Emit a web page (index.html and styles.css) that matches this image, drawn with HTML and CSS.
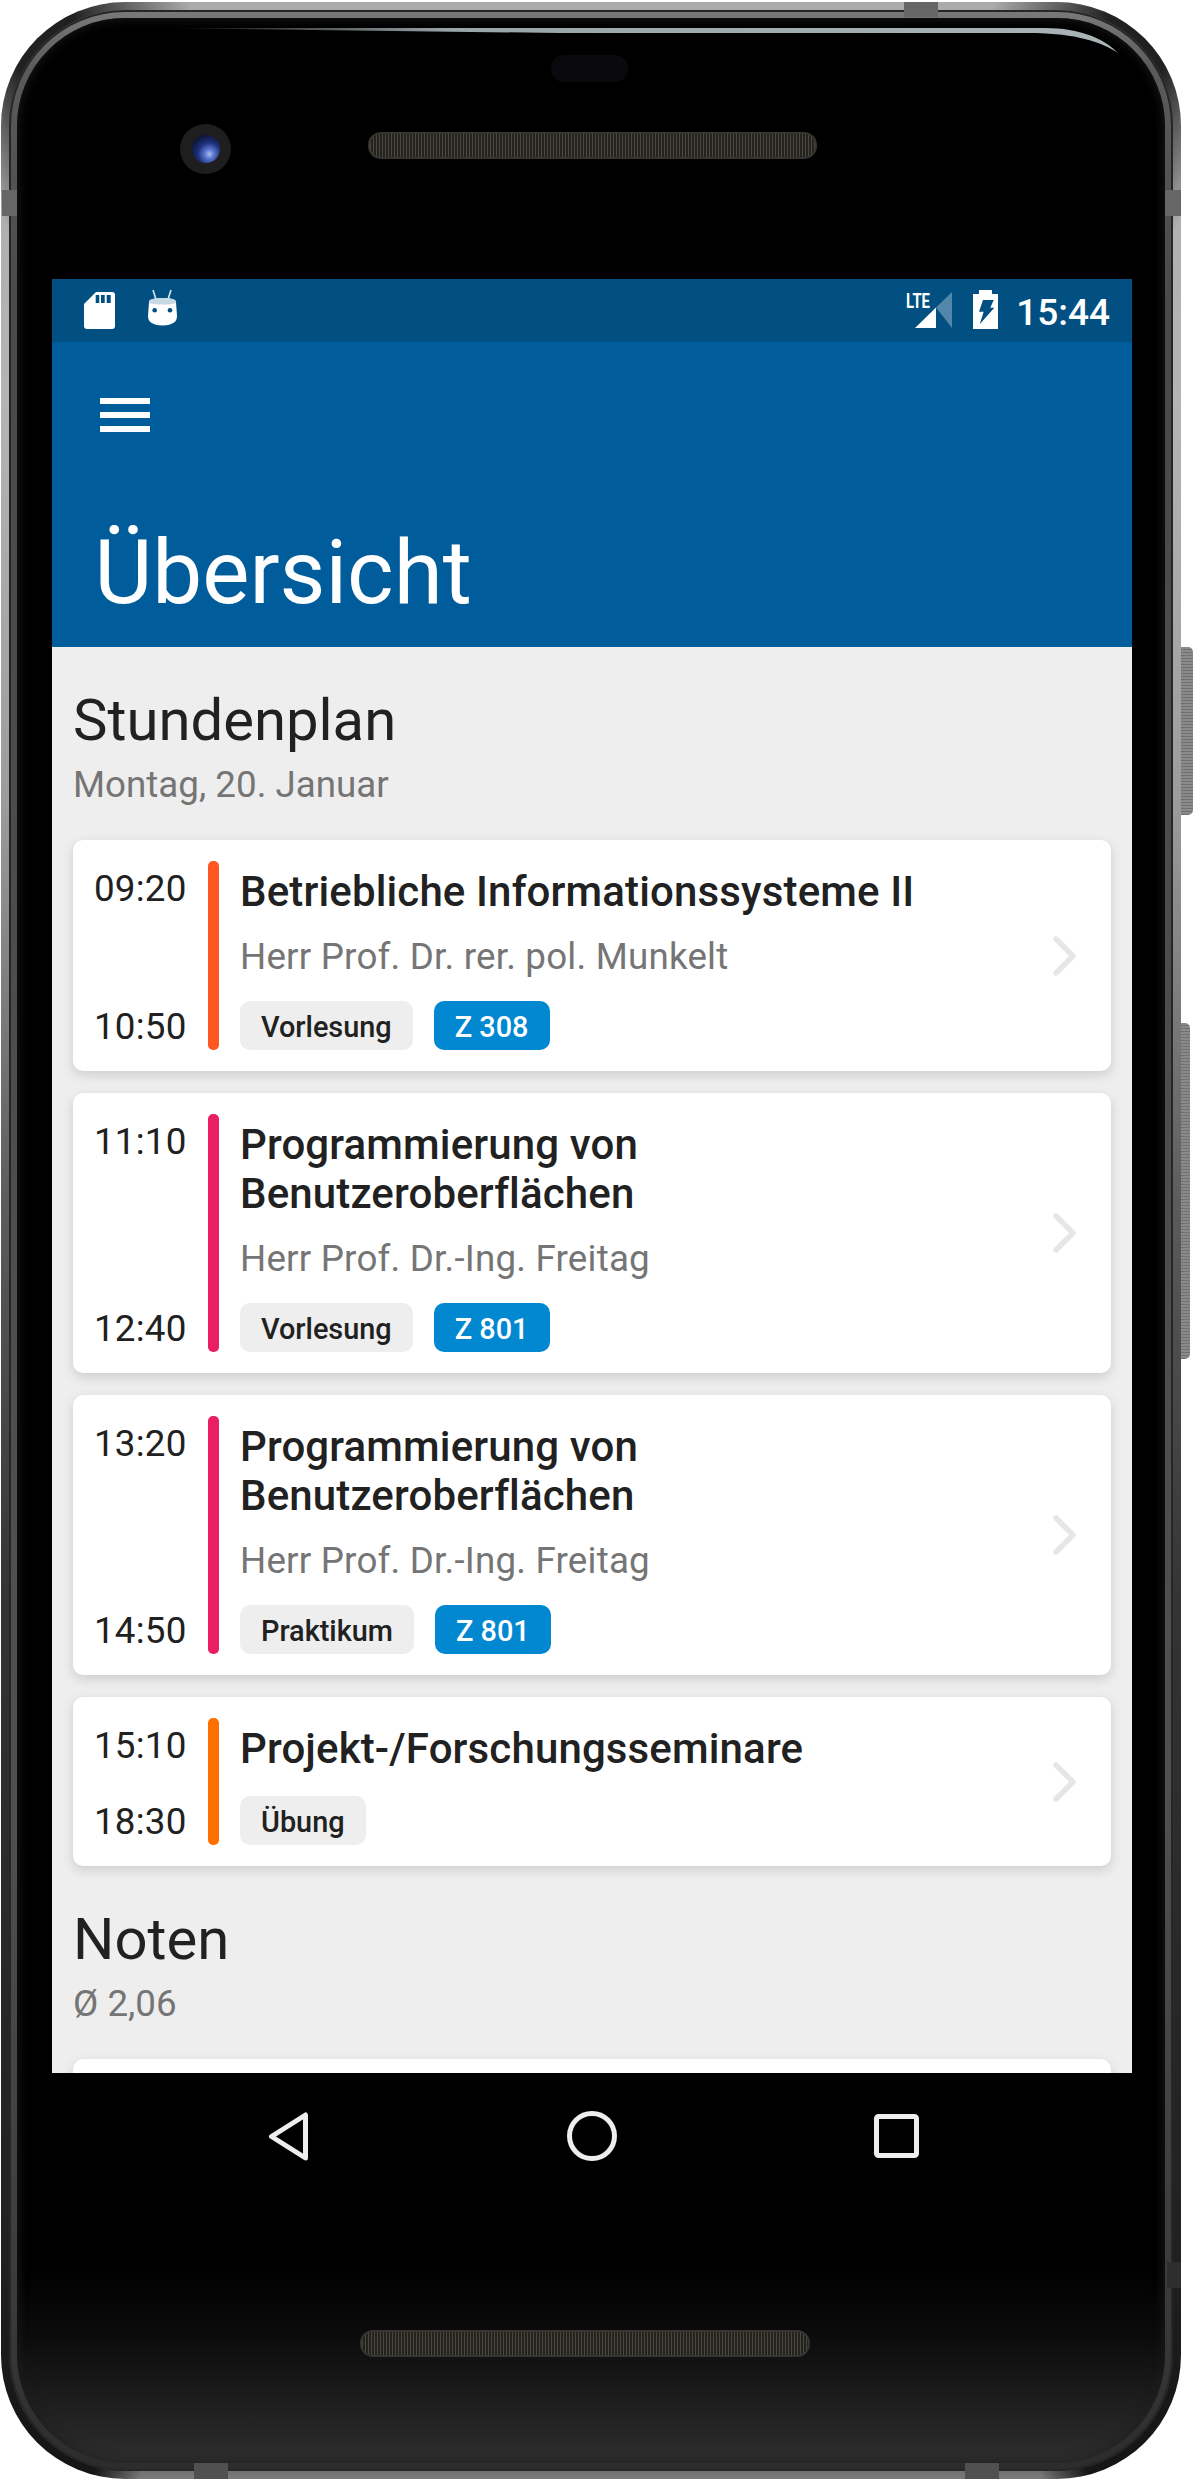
FILE: index.html
```html
<!DOCTYPE html>
<html lang="de">
<head>
    <meta charset="UTF-8">
    <meta name="viewport" content="width=device-width, initial-scale=1.0">
    <title>Übersicht</title>
    <link rel="stylesheet" href="styles.css">
</head>
<body>
<div class="phone">
    <div class="side-btn power"></div>
    <div class="side-btn volume"></div>
    <div class="seam seam-top"></div>
    <div class="seam seam-left"></div>
    <div class="seam seam-right"></div>
    <div class="seam seam-bottom-a"></div>
    <div class="seam seam-bottom-b"></div>
    <div class="seam seam-right-low"></div>
    <div class="bezel">
        <div class="face">
            <svg class="glint" width="1000" height="40" viewBox="0 0 1000 40">
                <defs>
                    <linearGradient id="glintFade" x1="0" x2="1" y1="0" y2="0">
                        <stop offset="0" stop-color="#9aa5a8" stop-opacity="0"/>
                        <stop offset="0.3" stop-color="#9aa5a8"/>
                        <stop offset="1" stop-color="#aab4b6"/>
                    </linearGradient>
                </defs>
                <path d="M0 1H885C920 1 945 12 958 26C940 14 915 7 875 6H400Z" fill="url(#glintFade)"/>
            </svg>

            <div class="face-top">
                <div class="sensor"></div>
                <div class="face-row">
                    <div class="camera"><div class="lens"></div></div>
                    <div class="speaker speaker-top"></div>
                </div>
            </div>

            <div class="screen">
                <div class="statusbar">
                    <div class="status-left">
                        <svg class="ic-sd" width="31" height="37" viewBox="0 0 31 37">
                            <path d="M12 0H28a3 3 0 0 1 3 3V34a3 3 0 0 1-3 3H3a3 3 0 0 1-3-3V12Z" fill="#fff"/>
                            <path d="M11.7 3h3.6v8h-3.6zM17 3h3.7v8H17zM22.7 3h4v8h-4z" fill="#024f82"/>
                        </svg>
                        <svg class="ic-mm" width="31" height="37" viewBox="0 0 31 37">
                            <path d="M6 1L8.7 9.5M24 1L21.3 9.5" stroke="#dbe6ee" stroke-width="1.6" fill="none"/>
                            <path d="M2 13C2 10 8 9 15.5 9S29 10 29 13L30 27C30 33 26 36 15.5 36.5 5 36 1 33 1 27Z" fill="#fff"/>
                            <path d="M2 13C2 10 8 9 15.5 9S29 10 29 13L29 14C22 16 9 16 2 14Z" fill="#c6d9e5"/>
                            <circle cx="7.7" cy="21.3" r="2.3" fill="#024f82"/>
                            <circle cx="23" cy="21.3" r="2.3" fill="#024f82"/>
                        </svg>
                    </div>
                    <div class="status-right">
                        <svg class="ic-lte" width="46" height="36" viewBox="0 0 46 36">
                            <text x="0" y="16" class="lte-text" textLength="24" lengthAdjust="spacingAndGlyphs">LTE</text>
                            <polygon points="9,36 30,15.5 30,36" fill="#fff"/>
                            <polygon points="30,15.5 46,0 46,36" fill="#fff" opacity="0.32"/>
                        </svg>
                        <svg class="ic-batt" width="25" height="39" viewBox="0 0 25 39">
                            <path d="M6 0H19V4H25V39H0V4H6Z" fill="#fff"/>
                            <polygon points="10,10 20.7,10 17.3,17.7 21.3,17.7 6.7,34.3 10.7,21.7 6,21.7" fill="#024f82"/>
                        </svg>
                        <span class="clock">15:44</span>
                    </div>
                </div>

                <div class="appbar">
                    <div class="hamburger"><span></span><span></span><span></span></div>
                    <h1>Übersicht</h1>
                </div>

                <div class="content">
                    <h2>Stundenplan</h2>
                    <p class="subhead">Montag, 20. Januar</p>

                    <div class="card">
                        <div class="times"><span>09:20</span><span>10:50</span></div>
                        <div class="bar bar-red"></div>
                        <div class="info">
                            <div class="title">Betriebliche Informationssysteme II</div>
                            <div class="teacher">Herr Prof. Dr. rer. pol. Munkelt</div>
                            <div class="tags"><span class="tag">Vorlesung</span><span class="tag room">Z 308</span></div>
                        </div>
                        <svg class="chevron" width="23" height="40" viewBox="0 0 23 40"><path d="M3 3L20 20L3 37"/></svg>
                    </div>

                    <div class="card">
                        <div class="times"><span>11:10</span><span>12:40</span></div>
                        <div class="bar bar-pink"></div>
                        <div class="info">
                            <div class="title">Programmierung von<br>Benutzeroberflächen</div>
                            <div class="teacher">Herr Prof. Dr.-Ing. Freitag</div>
                            <div class="tags"><span class="tag">Vorlesung</span><span class="tag room">Z 801</span></div>
                        </div>
                        <svg class="chevron" width="23" height="40" viewBox="0 0 23 40"><path d="M3 3L20 20L3 37"/></svg>
                    </div>

                    <div class="card">
                        <div class="times"><span>13:20</span><span>14:50</span></div>
                        <div class="bar bar-pink"></div>
                        <div class="info">
                            <div class="title">Programmierung von<br>Benutzeroberflächen</div>
                            <div class="teacher">Herr Prof. Dr.-Ing. Freitag</div>
                            <div class="tags"><span class="tag">Praktikum</span><span class="tag room">Z 801</span></div>
                        </div>
                        <svg class="chevron" width="23" height="40" viewBox="0 0 23 40"><path d="M3 3L20 20L3 37"/></svg>
                    </div>

                    <div class="card">
                        <div class="times"><span>15:10</span><span>18:30</span></div>
                        <div class="bar bar-orange"></div>
                        <div class="info">
                            <div class="title">Projekt-/Forschungsseminare</div>
                            <div class="tags"><span class="tag">Übung</span></div>
                        </div>
                        <svg class="chevron" width="23" height="40" viewBox="0 0 23 40"><path d="M3 3L20 20L3 37"/></svg>
                    </div>

                    <h2 class="next-section">Noten</h2>
                    <p class="subhead">Ø 2,06</p>
                    <div class="card card-empty"></div>
                </div>
            </div>

            <div class="navbar">
                <svg width="41" height="49" viewBox="0 0 41 49"><path d="M37.5 3V46L3.5 24.5Z"/></svg>
                <svg width="50" height="50" viewBox="0 0 50 50"><circle cx="25" cy="25" r="22.5"/></svg>
                <svg width="45" height="44" viewBox="0 0 45 44"><rect x="2.5" y="2.5" width="40" height="39" rx="2"/></svg>
            </div>

            <div class="speaker speaker-bottom"></div>
        </div>
    </div>
</div>
</body>
</html>
```

FILE: styles.css
```css
* {
    box-sizing: border-box;
}

body {
    margin: 0;
    background-color: #FFFFFF;
    font-family: Roboto, "Liberation Sans", sans-serif;
}

/* Phone shell: metal band goes dark towards the bottom, corners stay dark */
.phone {
    position: relative;
    width: 1180px;
    height: 2477px;
    margin: 2px 0 0 1px;
    padding: 8px;
    border-radius: 124px;
    background:
        conic-gradient(
            transparent 0deg 18deg,
            rgba(25, 25, 25, 0.95) 23deg 26deg,
            transparent 30deg 150deg,
            #161616 155deg 158deg,
            transparent 160deg 200deg,
            #161616 202deg 205deg,
            transparent 210deg 330deg,
            rgba(25, 25, 25, 0.95) 334deg 337deg,
            transparent 342deg 360deg
        ),
        linear-gradient(to bottom, #ababab 0, #ababab 20px, #b4b4b4 400px, #9c9c9c 800px, #5c5c5c 1200px, #343434 1600px, #242424 2100px, #1c1c1c 2455px, #6e6e6e 2466px, #7a7a7a 100%);
}

.bezel {
    height: 100%;
    padding: 8px;
    border-radius: 116px;
    background: linear-gradient(to bottom, #7a7a7a 0, #5a5a5a 60px, #4a4a4a 300px, #505050 1800px, #3a3a3a 2300px, #2c2c2c 100%);
    box-shadow: inset 0 0 0 2px #262626;
}

.face {
    position: relative;
    height: 100%;
    border-radius: 108px;
    overflow: hidden;
    background: linear-gradient(to bottom, #000000 0, #000000 2250px, #0c0c0c 2320px, #2e2e2e 100%);
    box-shadow: inset 0 0 12px #1e1e1e;
}

.glint {
    position: absolute;
    top: 9px;
    left: 143px;
}

.face-top {
    height: 261px;
    padding-top: 37px;
}

.sensor {
    width: 77px;
    height: 27px;
    margin-left: 534px;
    border-radius: 13px;
    background-color: #0a0a0e;
}

.face-row {
    display: flex;
    margin-top: 42px;
    padding-left: 163px;
}

.camera {
    display: flex;
    align-items: center;
    justify-content: center;
    width: 51px;
    height: 50px;
    border-radius: 50%;
    background-color: #1e1e1e;
}

.lens {
    width: 28px;
    height: 28px;
    border-radius: 50%;
    background: radial-gradient(circle at 62% 68%, #a8c0f0 0, #5a78d0 18%, #1c2f78 45%, #0a1230 80%);
}

.speaker {
    height: 27px;
    border: 2px solid #35342f;
    border-radius: 13px;
    background-color: #26251f;
    background-image: repeating-linear-gradient(90deg, #4a4840 0, #4a4840 1px, #23221d 1px, #23221d 3px);
}

.speaker-top {
    width: 449px;
    margin: 8px 0 0 137px;
}

.speaker-bottom {
    width: 450px;
    margin: 131px 0 0 343px;
}

/* Side buttons and antenna seams */
.side-btn {
    position: absolute;
    left: 1180px;
    border-radius: 0 5px 5px 0;
    background-color: #8a8a8a;
    background-image: repeating-linear-gradient(0deg, rgba(0, 0, 0, 0.18) 0, rgba(0, 0, 0, 0.18) 1px, transparent 1px, transparent 3px);
}

.power {
    top: 645px;
    width: 12px;
    height: 168px;
}

.volume {
    top: 1021px;
    width: 9px;
    height: 336px;
}

.seam {
    position: absolute;
    background-color: #666666;
}

.seam-top {
    top: 0;
    left: 903px;
    width: 34px;
    height: 15px;
}

.seam-left {
    top: 188px;
    left: 1px;
    width: 15px;
    height: 26px;
}

.seam-right {
    top: 188px;
    left: 1164px;
    width: 16px;
    height: 26px;
}

.seam-right-low {
    top: 2260px;
    left: 1166px;
    width: 14px;
    height: 26px;
    background-color: #2e2e2e;
}

.seam-bottom-a,
.seam-bottom-b {
    top: 2460px;
    width: 34px;
    height: 17px;
    background-color: #505050;
}

.seam-bottom-a {
    left: 193px;
}

.seam-bottom-b {
    left: 964px;
}

/* Screen */
.screen {
    width: 1080px;
    height: 1794px;
    margin-left: 35px;
    overflow: hidden;
    display: flex;
    flex-direction: column;
    background-color: #EEEEEE;
}

.statusbar {
    flex: none;
    display: flex;
    justify-content: space-between;
    height: 63px;
    background-color: #024f82;
    color: #FFFFFF;
}

.status-left {
    display: flex;
    gap: 32px;
    padding: 10px 0 0 32px;
}

.ic-sd {
    margin-top: 3px;
}

.status-right {
    display: flex;
    align-items: flex-start;
    padding-right: 22px;
}

.ic-lte {
    margin: 13px 21px 0 0;
    overflow: visible;
}

.lte-text {
    font-family: Roboto, sans-serif;
    font-size: 20px;
    font-weight: 700;
    fill: #FFFFFF;
}

.ic-batt {
    margin: 11px 18px 0 0;
}

.clock {
    font-size: 37px;
    font-weight: 500;
    line-height: 43px;
    margin-top: 12px;
}

.appbar {
    flex: none;
    height: 305px;
    padding: 56px 0 0 42.5px;
    background-color: #005c9a;
    color: #FFFFFF;
}

.hamburger {
    display: flex;
    flex-direction: column;
    gap: 8px;
    width: 50px;
    margin-left: 5.5px;
}

.hamburger span {
    height: 6px;
    background-color: #FFFFFF;
}

h1 {
    margin: 89px 0 0 0;
    font-size: 89px;
    font-weight: 400;
    line-height: 104px;
}

.content {
    padding: 39px 21px 0;
}

h2 {
    margin: 0;
    font-size: 58px;
    font-weight: 400;
    line-height: 68px;
    color: #212121;
}

.next-section {
    margin-top: 39px;
}

.subhead {
    margin: 9px 0 34px;
    font-size: 36.75px;
    line-height: 43px;
    color: #757575;
}

/* Timetable cards */
.card {
    display: flex;
    align-items: stretch;
    margin-bottom: 22px;
    padding: 21px 35px 21px 21px;
    border-radius: 10px;
    background-color: #FFFFFF;
    box-shadow: 0 4px 12px rgba(0, 0, 0, 0.14);
}

.card-empty {
    height: 100px;
}

.times {
    display: flex;
    flex-direction: column;
    justify-content: space-between;
    width: 93px;
    padding: 6px 0 2px;
    font-size: 36.75px;
    letter-spacing: 0.2px;
    line-height: 43px;
    color: #212121;
}

.bar {
    flex: none;
    width: 11px;
    margin: 0 21px 0 21px;
    border-radius: 5px;
}

.bar-red {
    background-color: #FF5722;
}

.bar-pink {
    background-color: #E91E63;
}

.bar-orange {
    background-color: #FF6F00;
}

.info {
    flex: 1;
    padding-top: 6px;
}

.title {
    font-size: 42px;
    font-weight: 500;
    letter-spacing: 0.14px;
    line-height: 49px;
    color: #212121;
}

.teacher {
    margin-top: 19px;
    font-size: 36.75px;
    letter-spacing: 0.2px;
    line-height: 43px;
    color: #757575;
}

.tags {
    display: flex;
    gap: 21px;
    margin-top: 23px;
}

.tag {
    height: 49px;
    padding: 0 21px;
    border-radius: 10px;
    background-color: #EEEEEE;
    font-size: 28.875px;
    font-weight: 500;
    line-height: 52px;
    color: #212121;
}

.room {
    background-color: #0288D1;
    color: #FFFFFF;
}

.chevron {
    align-self: center;
    flex: none;
}

.chevron path {
    fill: none;
    stroke: #E6E6E6;
    stroke-width: 5.5;
    stroke-linecap: round;
    stroke-linejoin: round;
}

/* Android nav keys */
.navbar {
    display: grid;
    grid-template-columns: repeat(3, 304px);
    justify-items: center;
    align-items: center;
    width: 1080px;
    height: 126px;
    margin-left: 35px;
    padding-left: 84px;
}

.navbar path,
.navbar circle,
.navbar rect {
    fill: none;
    stroke: #EEEEEE;
    stroke-width: 5;
    stroke-linejoin: round;
}
```
